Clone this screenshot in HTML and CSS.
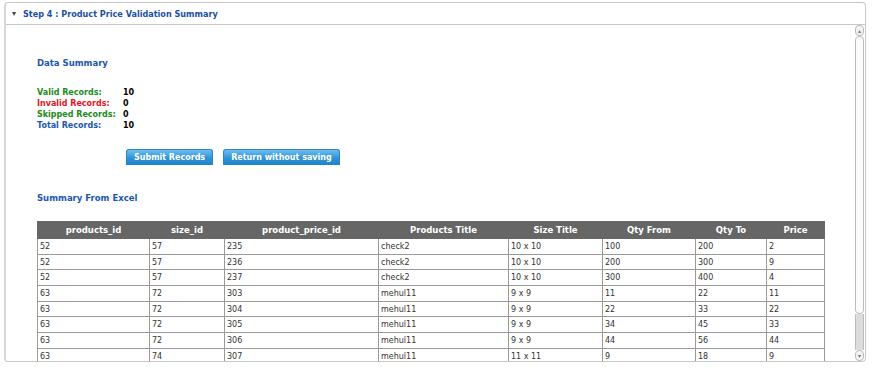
FILE: index.html
```html
<!DOCTYPE html>
<html lang="en">
<head>
    <meta charset="UTF-8">
    <title>Step 4 : Product Price Validation Summary</title>
    <link rel="stylesheet" href="styles.css">
</head>
<body>
    <div class="panel">
        <div class="panel-head">
            <span class="arrow">&#9662;</span>
            <span class="panel-title">Step 4 : Product Price Validation Summary</span>
        </div>
        <div class="panel-body">
            <div class="content">
                <h3 class="section-title first">Data Summary</h3>
                <table class="counts">
                    <tr><td class="valid">Valid Records:</td><td>10</td></tr>
                    <tr><td class="invalid">Invalid Records:</td><td>0</td></tr>
                    <tr><td class="valid">Skipped Records:</td><td>0</td></tr>
                    <tr><td class="total">Total Records:</td><td>10</td></tr>
                </table>
                <div class="actions">
                    <button type="button" class="btn">Submit Records</button>
                    <button type="button" class="btn">Return without saving</button>
                </div>
                <h3 class="section-title">Summary From Excel</h3>
                <table class="grid">
                    <colgroup>
                        <col style="width:112px"><col style="width:75px"><col style="width:154px"><col style="width:130px">
                        <col style="width:94px"><col style="width:93px"><col style="width:71px"><col style="width:58px">
                    </colgroup>
                    <thead>
                        <tr>
                            <th>products_id</th><th>size_id</th><th>product_price_id</th><th>Products Title</th>
                            <th>Size Title</th><th>Qty From</th><th>Qty To</th><th>Price</th>
                        </tr>
                    </thead>
                    <tbody>
                        <tr><td>52</td><td>57</td><td>235</td><td>check2</td><td>10 x 10</td><td>100</td><td>200</td><td>2</td></tr>
                        <tr><td>52</td><td>57</td><td>236</td><td>check2</td><td>10 x 10</td><td>200</td><td>300</td><td>9</td></tr>
                        <tr><td>52</td><td>57</td><td>237</td><td>check2</td><td>10 x 10</td><td>300</td><td>400</td><td>4</td></tr>
                        <tr><td>63</td><td>72</td><td>303</td><td>mehul11</td><td>9 x 9</td><td>11</td><td>22</td><td>11</td></tr>
                        <tr><td>63</td><td>72</td><td>304</td><td>mehul11</td><td>9 x 9</td><td>22</td><td>33</td><td>22</td></tr>
                        <tr><td>63</td><td>72</td><td>305</td><td>mehul11</td><td>9 x 9</td><td>34</td><td>45</td><td>33</td></tr>
                        <tr><td>63</td><td>72</td><td>306</td><td>mehul11</td><td>9 x 9</td><td>44</td><td>56</td><td>44</td></tr>
                        <tr><td>63</td><td>74</td><td>307</td><td>mehul11</td><td>11 x 11</td><td>9</td><td>18</td><td>9</td></tr>
                    </tbody>
                </table>
            </div>
            <div class="scrollbar">
                <div class="sb-btn">&#9652;</div>
                <div class="sb-thumb"></div>
                <div class="sb-track"></div>
                <div class="sb-btn">&#9662;</div>
            </div>
        </div>
    </div>
</body>
</html>
```

FILE: styles.css
```css
body {
    margin: 0;
    padding: 2px 6px 0 4px;
    font-family: 'DejaVu Sans', Verdana, sans-serif;
    background: #fff;
    color: #000;
}
.panel {
    height: 360px;
    box-sizing: border-box;
    border: 1px solid #c8c8c8;
    border-left: 2px solid #d8d8d8;
    border-radius: 4px;
    display: flex;
    flex-direction: column;
    overflow: hidden;
}
.panel-head {
    height: 21px;
    flex: none;
    border-bottom: 1px solid #c8c8c8;
    display: flex;
    align-items: center;
    padding-left: 6px;
}
.arrow {
    font-size: 8px;
    color: #444;
    width: 11px;
}
.panel-title {
    font-size: 8.1px;
    font-weight: bold;
    color: #1a4fa6;
}
.panel-body {
    flex: 1;
    display: flex;
    min-height: 0;
}
.content {
    flex: 1;
    overflow: hidden;
    padding-left: 31px;
}
.section-title {
    margin: 27px 0 0;
    font-size: 8.5px;
    font-weight: bold;
    color: #1a56b0;
    line-height: 12px;
}
.section-title.first {
    margin-top: 32px;
}
.counts {
    margin-top: 18px;
    border-collapse: collapse;
}
.counts td {
    padding: 0;
    font-size: 8px;
    font-weight: bold;
    line-height: 11px;
    height: 11px;
}
.counts td:first-child {
    width: 86px;
}
.valid { color: #1c8a1c; }
.invalid { color: #e8141c; }
.total { color: #1a56b0; }
.actions {
    margin: 18px 0 0 89px;
    display: flex;
    gap: 10px;
}
.btn {
    height: 16px;
    padding: 0 7px;
    border: 1px solid #2a87c4;
    border-bottom: none;
    border-radius: 3px 3px 0 0;
    background: linear-gradient(#6fbdee, #2e93d6 55%, #1f82c6);
    color: #fff;
    font-family: inherit;
    font-size: 8px;
    font-weight: bold;
}
.grid {
    margin-top: 17px;
    border-collapse: collapse;
    table-layout: fixed;
    width: 787px;
}
.grid th {
    background: #666;
    color: #fff;
    font-size: 8.5px;
    font-weight: bold;
    height: 16px;
    padding: 0;
    border: 1px solid #666;
}
.grid td {
    font-size: 8px;
    color: #333;
    height: 14.7px;
    padding: 0 2px;
    border: 1px solid #9a9a9a;
}
.scrollbar {
    width: 9px;
    flex: none;
    margin-right: 1px;
    display: flex;
    flex-direction: column;
}
.sb-btn {
    height: 9px;
    font-size: 6px;
    line-height: 9px;
    text-align: center;
    color: #777;
    border: 1px solid #bbb;
    border-radius: 4px;
    background: #f4f4f4;
}
.sb-thumb {
    height: 276px;
    border: 1px solid #bbb;
    border-radius: 4px;
    background: #fbfbfb;
}
.sb-track {
    flex: 1;
    background: #dcdcdc;
    border-left: 1px solid #bbb;
    border-right: 1px solid #bbb;
}
```
